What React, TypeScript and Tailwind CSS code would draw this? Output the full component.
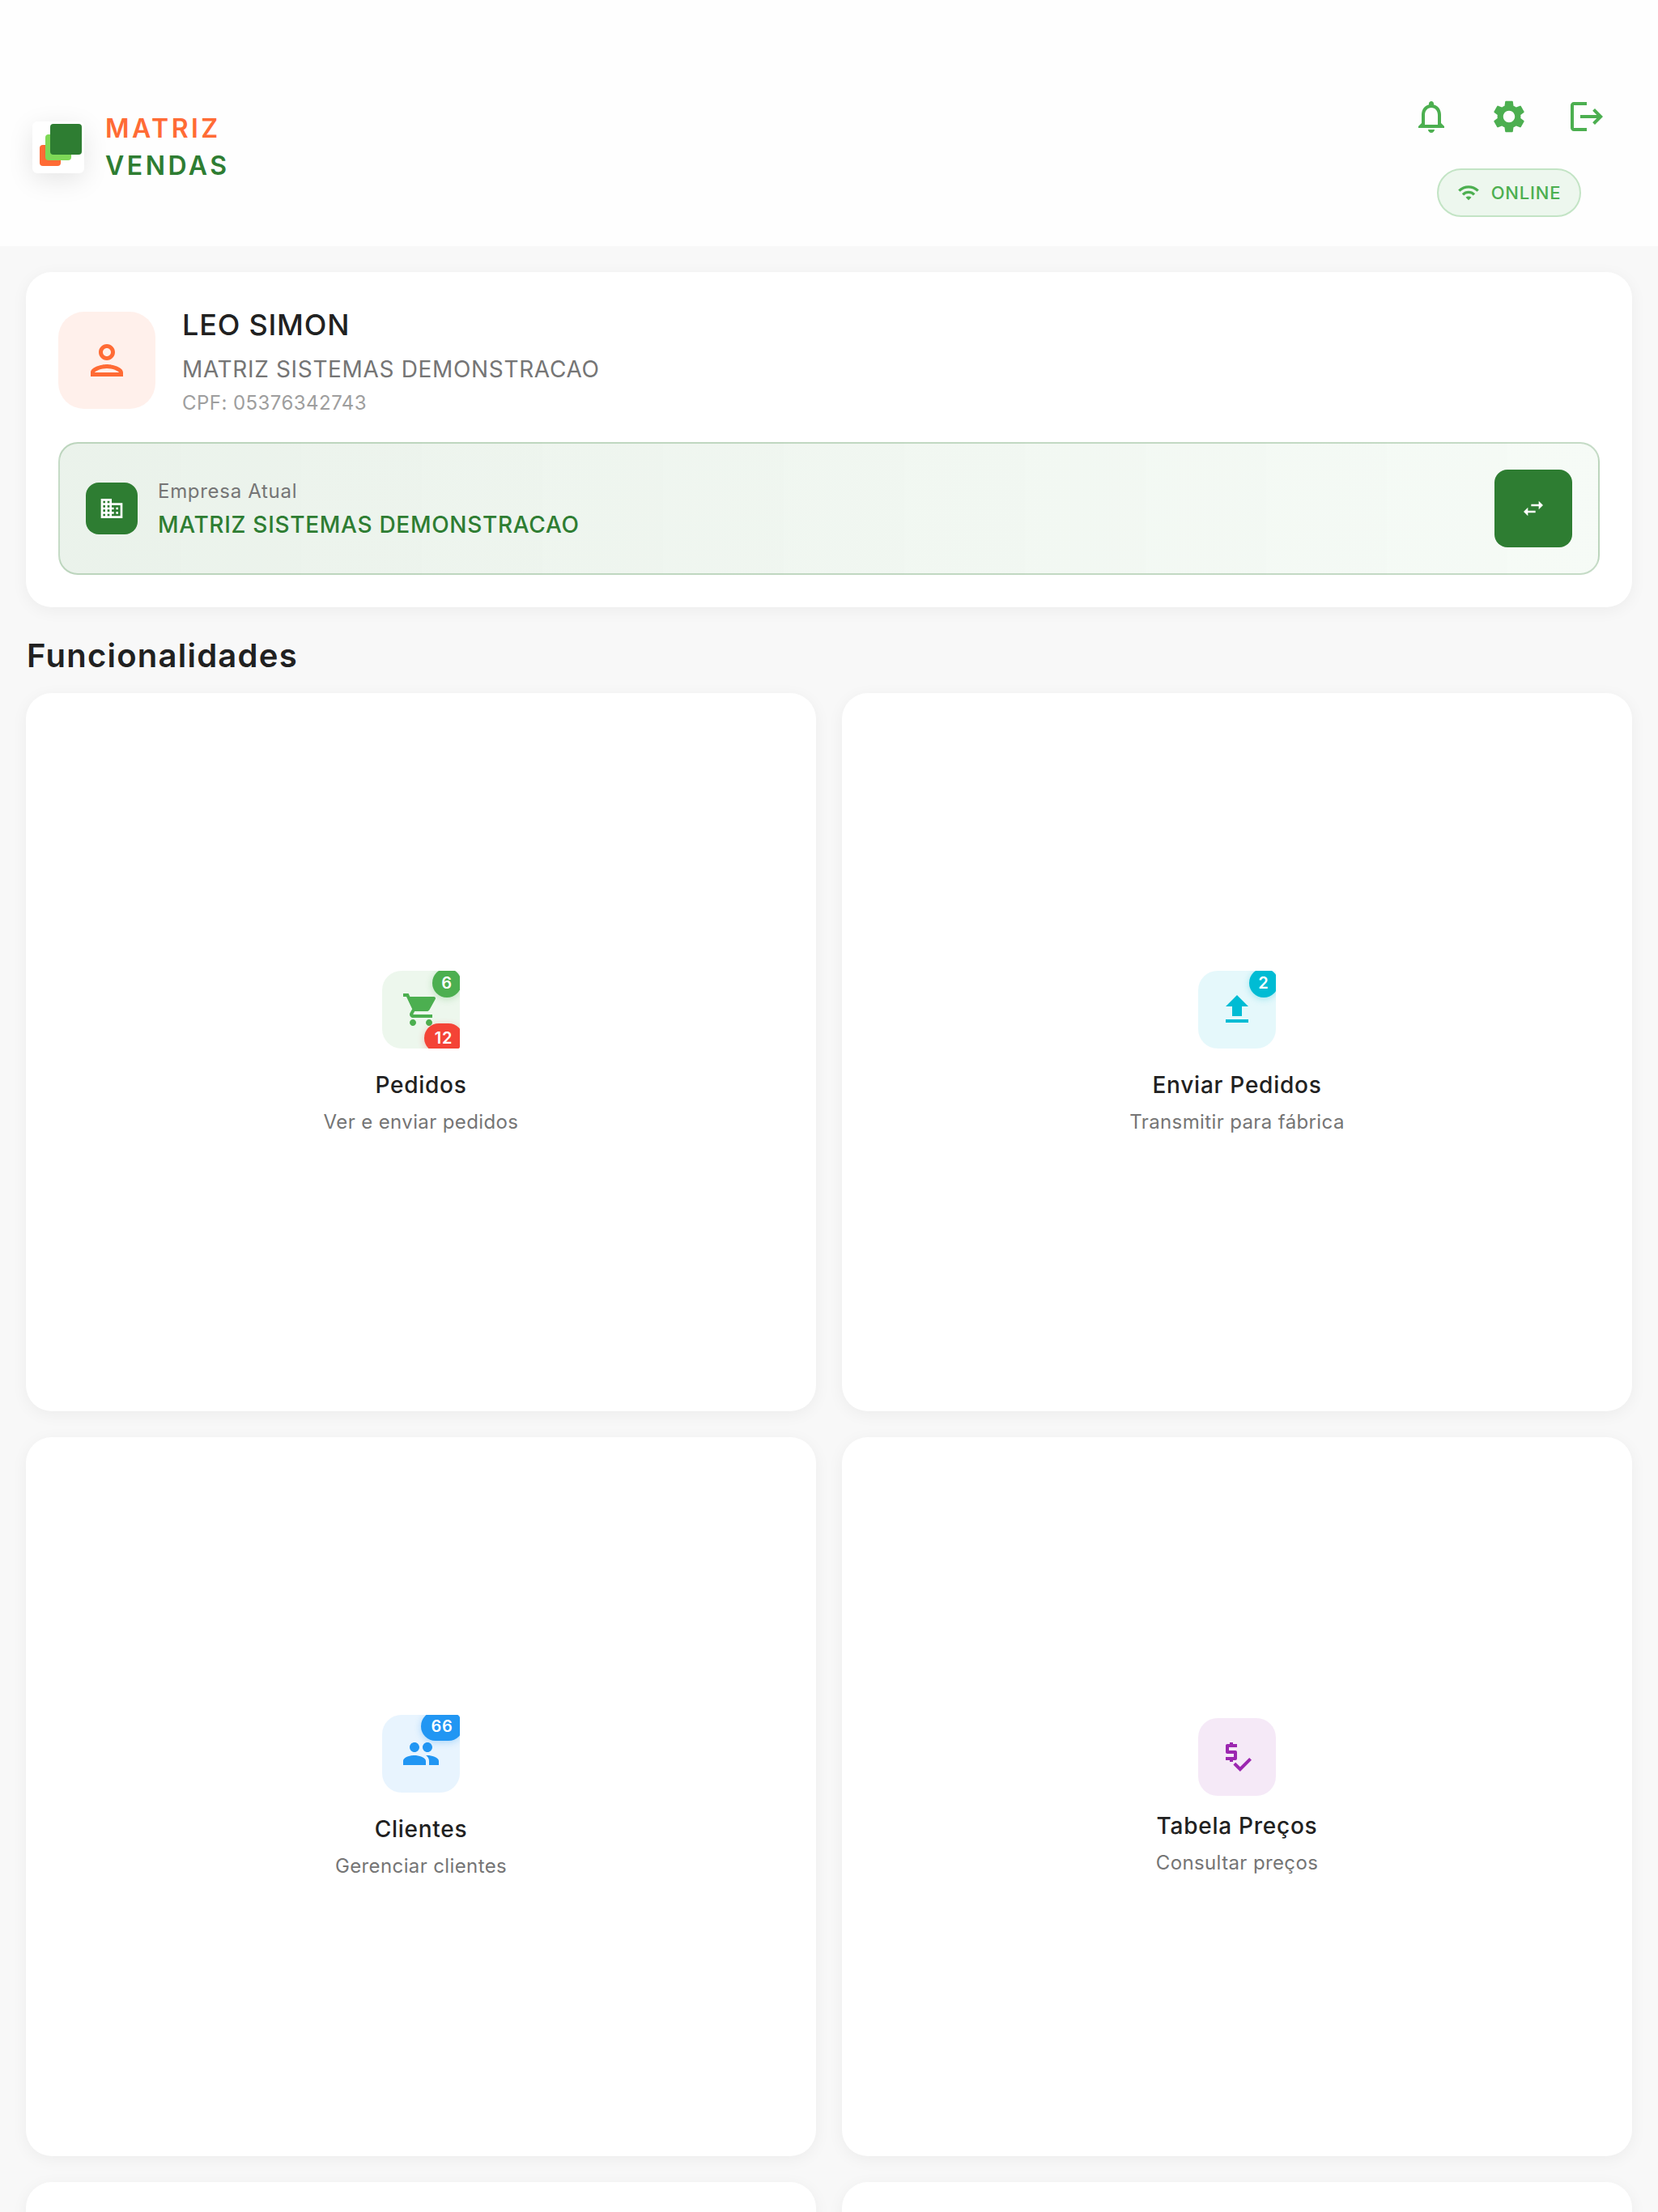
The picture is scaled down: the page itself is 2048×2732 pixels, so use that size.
import type { ReactNode } from "react";
import {
  MdBusiness,
  MdFileUpload,
  MdLogout,
  MdOutlineNotifications,
  MdOutlinePerson,
  MdPeople,
  MdPriceCheck,
  MdSettings,
  MdShoppingCart,
  MdSwapHoriz,
  MdWifi,
} from "react-icons/md";

function Logo() {
  return (
    <div className="flex items-center gap-[26px]">
      <div className="relative h-16 w-16 rounded-[6px] bg-white shadow-[0_8px_32px_rgba(0,0,0,0.1)]">
        <div className="absolute left-[9px] top-[29px] h-[26px] w-[26px] rounded-[4px] bg-[#FF6B35]" />
        <div className="absolute left-4 top-4 h-8 w-8 rounded-[4px] bg-[#7ED957]" />
        <div className="absolute left-[22px] top-[3px] h-[38px] w-[39px] rounded-[4px] bg-[#2E7D32]" />
      </div>
      <div className="text-[32px] font-semibold leading-[46px] tracking-[3.5px]">
        <p className="text-[#FF6B35]">MATRIZ</p>
        <p className="text-[#2E7D32]">VENDAS</p>
      </div>
    </div>
  );
}

function Header() {
  return (
    <header className="flex h-[304px] justify-between bg-[#FEFEFE] pl-10 pr-16 pt-[120px]">
      <div className="pt-4">
        <Logo />
      </div>
      <div className="flex flex-col items-center">
        <div className="flex gap-12 text-[#4CAF50]">
          <MdOutlineNotifications size={48} />
          <MdSettings size={48} />
          <MdLogout size={48} />
        </div>
        <div className="mt-10 flex h-[60px] w-[178px] items-center justify-center gap-[14px] rounded-full border-2 border-[#C3E4C5] bg-[#EDF7EE] text-[#4CAF50]">
          <MdWifi size={28} />
          <span className="text-[22px] font-medium leading-none tracking-[0.8px]">ONLINE</span>
        </div>
      </div>
    </header>
  );
}

function UserCard() {
  return (
    <section className="rounded-[32px] bg-white p-10 shadow-[0_4px_20px_rgba(0,0,0,0.05)]">
      <div className="flex items-center gap-[33px]">
        <div className="flex h-[120px] w-[120px] items-center justify-center rounded-[32px] bg-[#FFF0EB] text-[#FF6B35]">
          <MdOutlinePerson size={60} />
        </div>
        <div className="flex h-[138px] flex-col">
          <p className="text-[36px] font-medium leading-[50px] tracking-[0.8px] text-[#212121]">LEO SIMON</p>
          <p className="mt-[11px] text-[28px] leading-[39px] tracking-[0.66px] text-[#757575]">
            MATRIZ SISTEMAS DEMONSTRACAO
          </p>
          <p className="mt-[5px] text-[24px] leading-[33px] tracking-[0.45px] text-[#9E9E9E]">CPF: 05376342743</p>
        </div>
      </div>
      <div className="mt-8 flex items-center justify-between rounded-3xl border-2 border-[#2E7D32]/25 bg-gradient-to-r from-[#2E7D32]/10 to-[#4CAF50]/5 p-8">
        <div className="flex items-center gap-[25px]">
          <div className="flex h-16 w-16 items-center justify-center rounded-2xl bg-[#2E7D32] text-white">
            <MdBusiness size={32} />
          </div>
          <div className="pt-[2px]">
            <p className="text-[24px] leading-[33px] tracking-[0.7px] text-[#757575]">Empresa Atual</p>
            <p className="mt-[6px] text-[28px] font-medium leading-[39px] tracking-[0.7px] text-[#2E7D32]">
              MATRIZ SISTEMAS DEMONSTRACAO
            </p>
          </div>
        </div>
        <button className="flex h-24 w-24 items-center justify-center rounded-2xl bg-[#2E7D32] text-white">
          <MdSwapHoriz size={32} />
        </button>
      </div>
    </section>
  );
}

function Badge({ className, children }: { className: string; children: ReactNode }) {
  return (
    <span
      className={`absolute flex h-[36px] items-center justify-center rounded-[20px] text-[20px] font-semibold tracking-[0.8px] text-white ${className}`}
    >
      {children}
    </span>
  );
}

function Feature({
  icon,
  tileClass,
  title,
  subtitle,
  badges,
  gapClass = "mt-[26px]",
}: {
  icon: ReactNode;
  tileClass: string;
  title: string;
  subtitle: string;
  badges?: ReactNode;
  gapClass?: string;
}) {
  return (
    <div className="flex aspect-[1.1] flex-col items-center justify-center rounded-[32px] bg-white pt-[3px] shadow-[0_4px_20px_rgba(0,0,0,0.05)]">
      <div className="relative h-24 w-24 overflow-hidden">
        <div className={`flex h-24 w-24 items-center justify-center rounded-3xl ${tileClass}`}>{icon}</div>
        {badges}
      </div>
      <p className={`${gapClass} text-[28px] font-medium leading-[39px] tracking-[0.75px] text-[#212121]`}>{title}</p>
      <p className="mt-[9px] text-[24px] leading-[34px] tracking-[0.38px] text-[#757575]">{subtitle}</p>
    </div>
  );
}

export default function App() {
  return (
    <div className="h-[2732px] overflow-hidden bg-[#F8F8F8] font-['Inter',sans-serif]">
      <Header />
      <main className="px-8 pt-8">
        <UserCard />
        <h2 className="mb-[18px] ml-px mt-8 text-[40px] font-semibold leading-[56px] tracking-[1.25px] text-[#212121]">
          Funcionalidades
        </h2>
        <div className="grid grid-cols-2 gap-8">
          <Feature
            icon={<MdShoppingCart size={48} />}
            tileClass="bg-[#4CAF50]/10 text-[#4CAF50]"
            title="Pedidos"
            subtitle="Ver e enviar pedidos"
            badges={
              <>
                <Badge className="right-[-2px] top-[-3px] w-9 bg-[#4CAF50] shadow-[0_2px_8px_rgba(76,175,80,0.3)]">6</Badge>
                <Badge className="bottom-[-5px] right-[-4px] w-12 bg-[#F44336] shadow-[0_2px_8px_rgba(244,67,54,0.3)]">12</Badge>
              </>
            }
          />
          <Feature
            icon={<MdFileUpload size={48} />}
            tileClass="bg-[#00BCD4]/10 text-[#00BCD4]"
            title="Enviar Pedidos"
            subtitle="Transmitir para fábrica"
            badges={
              <Badge className="right-[-3px] top-[-3px] w-9 bg-[#00BCD4] shadow-[0_2px_8px_rgba(0,188,212,0.3)]">2</Badge>
            }
          />
          <Feature
            icon={<MdPeople size={48} />}
            tileClass="bg-[#2196F3]/10 text-[#2196F3]"
            title="Clientes"
            subtitle="Gerenciar clientes"
            badges={
              <Badge className="right-[-4px] top-[-4px] w-[52px] bg-[#2196F3] shadow-[0_2px_8px_rgba(33,150,243,0.3)]">66</Badge>
            }
          />
          <Feature
            icon={<MdPriceCheck size={48} />}
            tileClass="bg-[#9C27B0]/10 text-[#9C27B0]"
            title="Tabela Preços"
            subtitle="Consultar preços"
            gapClass="mt-[18px]"
          />
          <div className="aspect-[1.1] rounded-[32px] bg-white shadow-[0_4px_20px_rgba(0,0,0,0.05)]" />
          <div className="aspect-[1.1] rounded-[32px] bg-white shadow-[0_4px_20px_rgba(0,0,0,0.05)]" />
        </div>
      </main>
    </div>
  );
}
